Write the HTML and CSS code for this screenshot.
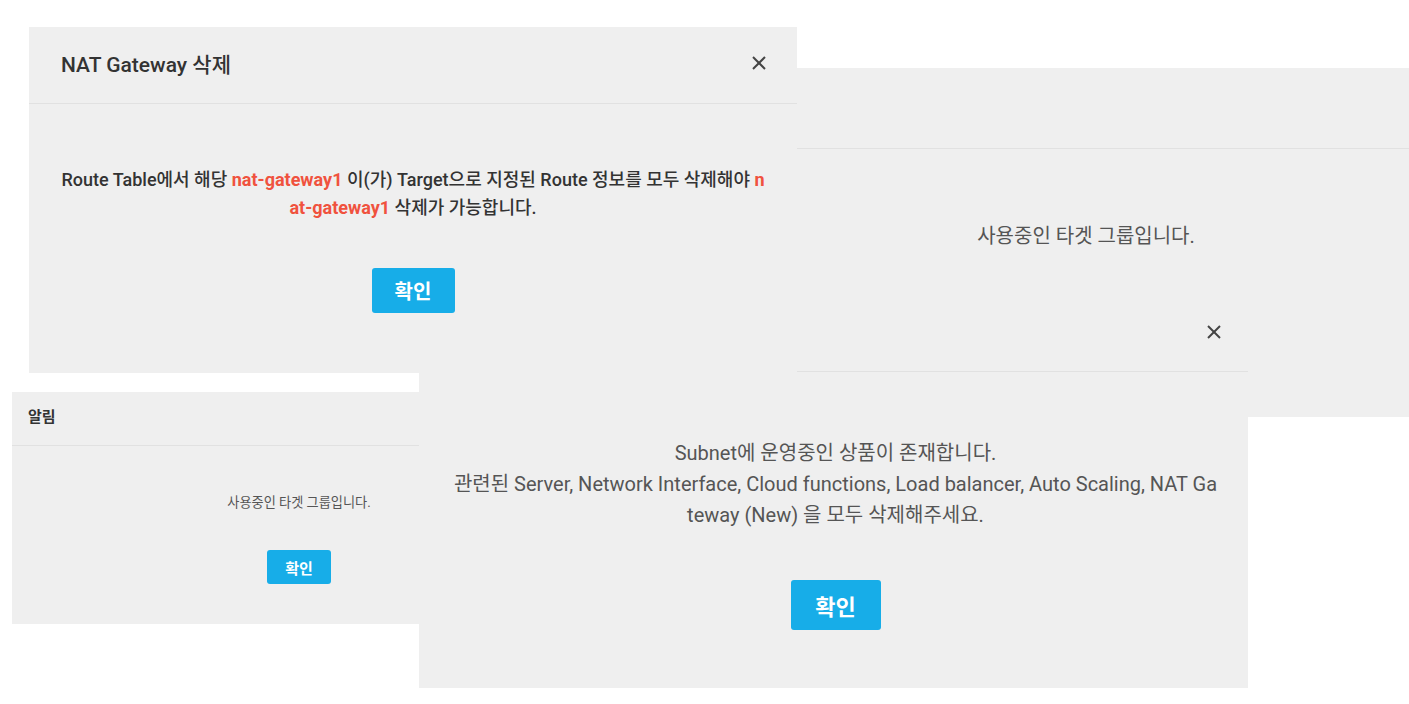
FILE: index.html
```html
<!DOCTYPE html>
<html lang="ko">
<head>
    <meta charset="UTF-8">
    <meta name="viewport" content="width=device-width, initial-scale=1.0">
    <title>삭제 알림 모음</title>
    <link rel="stylesheet" href="styles.css">
</head>
<body>
    <div class="board">
        <!-- 타겟 그룹 (오른쪽 위) -->
        <div class="dialog dialog-target">
            <div class="dialog-header"></div>
            <div class="dialog-body">
                <p class="message">사용중인 타겟 그룹입니다.</p>
            </div>
        </div>

        <!-- 알림 (왼쪽 아래) -->
        <div class="dialog dialog-notice">
            <div class="dialog-header">
                <h2 class="title">알림</h2>
            </div>
            <div class="dialog-body">
                <p class="message">사용중인 타겟 그룹입니다.</p>
                <button class="btn-ok">확인</button>
            </div>
        </div>

        <!-- Subnet -->
        <div class="dialog dialog-subnet">
            <div class="dialog-header">
                <button class="btn-close" aria-label="닫기">
                    <svg width="16" height="16" viewBox="0 0 16 16" fill="none" stroke="currentColor" stroke-width="2">
                        <line x1="2" y1="2" x2="14" y2="14"></line>
                        <line x1="14" y1="2" x2="2" y2="14"></line>
                    </svg>
                </button>
            </div>
            <div class="dialog-body">
                <p class="message">Subnet에 운영중인 상품이 존재합니다.<br>관련된 Server, Network Interface, Cloud functions, Load balancer, Auto Scaling, NAT Ga<br>teway (New) 을 모두 삭제해주세요.</p>
                <button class="btn-ok">확인</button>
            </div>
        </div>

        <!-- NAT Gateway 삭제 -->
        <div class="dialog dialog-nat">
            <div class="dialog-header">
                <h2 class="title">NAT Gateway 삭제</h2>
                <button class="btn-close" aria-label="닫기">
                    <svg width="14" height="14" viewBox="0 0 14 14" fill="none" stroke="currentColor" stroke-width="2">
                        <line x1="1" y1="1" x2="13" y2="13"></line>
                        <line x1="13" y1="1" x2="1" y2="13"></line>
                    </svg>
                </button>
            </div>
            <div class="dialog-body">
                <p class="message">Route Table에서 해당 <span class="hl">nat-gateway1</span> 이(가) Target으로 지정된 Route 정보를 모두 삭제해야 <span class="hl">n</span><br><span class="hl">at-gateway1</span> 삭제가 가능합니다.</p>
                <button class="btn-ok">확인</button>
            </div>
        </div>
    </div>
</body>
</html>
```

FILE: styles.css
```css
* {
    margin: 0;
    padding: 0;
    box-sizing: border-box;
}

body {
    background: #fff;
    font-family: Roboto, "Noto Sans CJK KR", sans-serif;
    overflow: hidden;
}

.board {
    position: relative;
    width: 1409px;
    height: 704px;
    overflow: hidden;
}

.dialog {
    position: absolute;
    background: #efefef;
    display: flex;
    flex-direction: column;
}

.dialog-header {
    display: flex;
    align-items: center;
    justify-content: space-between;
    border-bottom: 1px solid #e1e1e1;
    flex-shrink: 0;
}

.dialog-body {
    display: flex;
    flex-direction: column;
    align-items: center;
    text-align: center;
}

.title {
    color: #333;
    font-weight: 500;
}

.message {
    color: #555;
}

.btn-close {
    border: none;
    background: none;
    color: #444;
    display: flex;
    align-items: center;
    justify-content: center;
    cursor: pointer;
}

.btn-ok {
    border: none;
    border-radius: 3px;
    background: #17ade8;
    color: #fff;
    font-family: Roboto, "Noto Sans CJK KR", sans-serif;
    font-weight: 700;
    cursor: pointer;
}

.hl {
    color: #f0523e;
    font-weight: 700;
}

/* NAT Gateway 삭제 */
.dialog-nat {
    left: 29px;
    top: 27px;
    width: 768px;
    height: 346px;
}

.dialog-nat .dialog-header {
    height: 77px;
    padding: 0 31px 4px 32px;
}

.dialog-nat .title {
    font-size: 21px;
}

.dialog-nat .dialog-body {
    padding-top: 62px;
}

.dialog-nat .message {
    color: #333;
    font-size: 18px;
    font-weight: 500;
    line-height: 28px;
}

.dialog-nat .btn-ok {
    margin-top: 46px;
    width: 83px;
    height: 45px;
    font-size: 20px;
}

/* 타겟 그룹 */
.dialog-target {
    left: 763px;
    top: 68px;
    width: 646px;
    height: 349px;
}

.dialog-target .dialog-header {
    height: 81px;
}

.dialog-target .dialog-body {
    padding-top: 74px;
}

.dialog-target .message {
    font-size: 20px;
    line-height: 26px;
}

/* 알림 */
.dialog-notice {
    left: 12px;
    top: 392px;
    width: 574px;
    height: 232px;
}

.dialog-notice .dialog-header {
    height: 54px;
    padding: 0 16px 6px;
}

.dialog-notice .title {
    font-size: 15px;
    font-weight: 700;
}

.dialog-notice .dialog-body {
    padding-top: 47px;
}

.dialog-notice .message {
    font-size: 13.2px;
    line-height: 20px;
}

.dialog-notice .btn-ok {
    margin-top: 37px;
    width: 64px;
    height: 34px;
    font-size: 15px;
}

/* Subnet */
.dialog-subnet {
    left: 419px;
    top: 295px;
    width: 829px;
    height: 393px;
}

.dialog-subnet .dialog-header {
    height: 77px;
    justify-content: flex-end;
    padding: 0 26px 2px 0;
}

.dialog-subnet .dialog-body {
    padding: 66px 0 0 4px;
}

.dialog-subnet .message {
    font-size: 20px;
    line-height: 31px;
}

.dialog-subnet .btn-ok {
    margin-top: 49px;
    width: 90px;
    height: 50px;
    font-size: 22px;
}
```
